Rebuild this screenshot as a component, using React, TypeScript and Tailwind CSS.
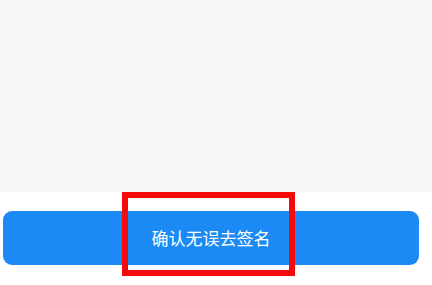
export default function App() {
  return (
    <div className="relative w-[432px] h-[285px] bg-white overflow-hidden" style={{ fontFamily: '"Noto Sans CJK SC", "Noto Sans", sans-serif' }}>
      <div className="h-[192px] bg-[#f6f7f9]" />
      <div className="pt-[19px] pl-[3px] pr-[13px]">
        <button className="w-full h-[54px] rounded-[9px] bg-[#1c8af5] text-white text-[17px] flex items-center justify-center">
          确认无误去签名
        </button>
      </div>
      {/* annotation frame */}
      <div className="absolute left-[122px] top-[192px] w-[173px] h-[84px] border-[6px] border-[#f50a0a] pointer-events-none" />
    </div>
  );
}
